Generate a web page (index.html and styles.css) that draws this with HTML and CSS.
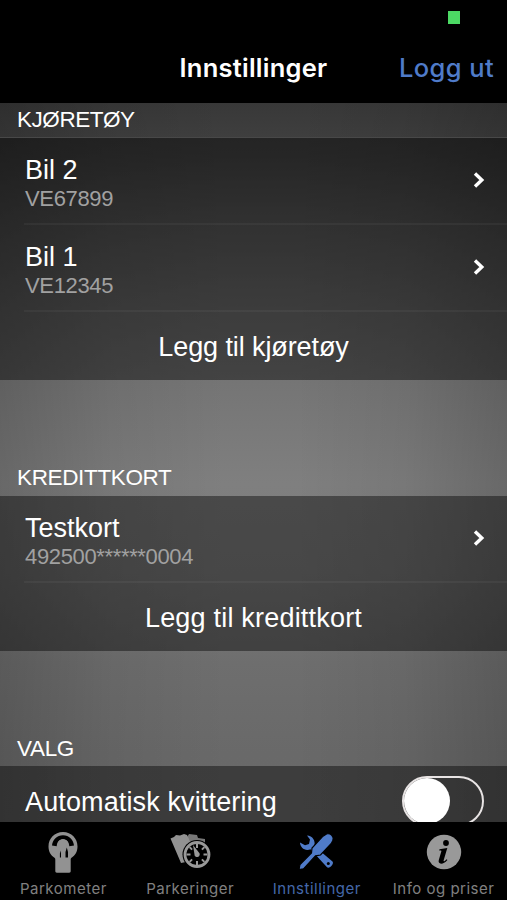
FILE: index.html
```html
<!DOCTYPE html>
<html lang="no">
<head>
<meta charset="utf-8">
<title>Innstillinger</title>
<link rel="stylesheet" href="styles.css">
</head>
<body>
<div class="app">
  <header class="navbar">
    <i class="indicator"></i>
    <h1>Innstillinger</h1>
    <a class="logout">Logg ut</a>
  </header>
  <main class="content">
    <h2 class="label label-first">KJØRETØY</h2>
    <section class="group">
      <div class="row">
        <div class="text"><div class="name">Bil 2</div><div class="sub">VE67899</div></div>
        <svg class="chevron" viewBox="0 0 12 18"><path d="M2 2.500 8.800 9 2 15.500"/></svg>
      </div>
      <div class="row">
        <div class="text"><div class="name">Bil 1</div><div class="sub">VE12345</div></div>
        <svg class="chevron" viewBox="0 0 12 18"><path d="M2 2.500 8.800 9 2 15.500"/></svg>
      </div>
      <div class="add add-vehicle">Legg til kjøretøy</div>
    </section>
    <h2 class="label label-card">KREDITTKORT</h2>
    <section class="group">
      <div class="row">
        <div class="text"><div class="name">Testkort</div><div class="sub">492500******0004</div></div>
        <svg class="chevron" viewBox="0 0 12 18"><path d="M2 2.500 8.800 9 2 15.500"/></svg>
      </div>
      <div class="add add-card">Legg til kredittkort</div>
    </section>
    <h2 class="label">VALG</h2>
    <section class="group">
      <div class="option"><div class="name">Automatisk kvittering</div><span class="switch"></span></div>
    </section>
  </main>
  <nav class="tabs">
    <a class="tab">
      <svg viewBox="0 0 44 44"><path fill="#929292" d="M22 2C13.500 2 7.500 8.500 7.500 16.500c0 5 2.300 9 6 11.300.8.700.8 1.200.8 2.200v11c0 1 .5 1.700 1.500 1.700h12.400c1 0 1.500-.7 1.500-1.700V30c0-1 0-1.500.8-2.200 3.700-2.300 6-6.300 6-11.300C36.500 8.500 30.500 2 22 2z"/><path fill="#000" d="M11 15.500C11.500 9.500 16 5.200 22 5.200s10.500 4.300 11 10.300l-4.700.7c-.3-4-2.700-6.700-6.300-6.700s-6 2.700-6.300 6.700z"/><circle cx="22" cy="14.500" r="5.500" fill="#929292"/><path fill="#000" d="M24.500 27.500v-5.500l1.300-4.500 1.200 4.500v5.500zM18.900 27.500v-4l.6-3 .5 3v4z"/></svg>
      <span>Parkometer</span>
    </a>
    <a class="tab">
      <svg viewBox="0 0 44 44"><path fill="#777" d="m18 9 3-5 8 1 1 3 7 1v5L22 18z"/><path fill="#929292" d="M2.500 8.500 6 7l2-2 4 .5 4-1.500 3 1 1.500 3 2 5L18 32l-5 1z"/><circle cx="29" cy="24.500" r="14.500" fill="#000"/><circle cx="29" cy="24.500" r="12" fill="none" stroke="#999" stroke-width="2.800"/><path fill="none" stroke="#999" stroke-width="2" d="M29 14v4M29 31v4M18.500 24.500h4M35.500 24.500h4M21.600 17.100l2.500 2.500M33.900 29.400l2.500 2.500M21.600 31.900l2.500-2.500M33.900 19.600l2.500-2.500"/><path fill="#999" d="m25 15 6.500 8.200c1.200 3-2.800 5.500-4.800 2.500z"/></svg>
      <span>Parkeringer</span>
    </a>
    <a class="tab active">
      <svg viewBox="0 0 44 44"><path fill="#4f7bc9" d="M12 5.500c5.500 0 9 5.800 7.200 10.500L37.500 31.500c2 2-3 7.800-5.500 5.800L15.500 19.300C10 21.500 5 17.500 5 12.500l5 2.700 4-1.200 1-4.500z"/><circle cx="33.300" cy="33.500" r="1.500" fill="#000"/><path fill="#4f7bc9" stroke="#000" stroke-width="1.200" d="m28 6.200 3.500-2.300c4.200-.9 7.800 2.600 6.300 6.600l-1.500 3L25.500 25l-5 .8L8.500 38.800 4 39.500l1-5 11.500-11.500.5-5z"/></svg>
      <span>Innstillinger</span>
    </a>
    <a class="tab">
      <svg viewBox="0 0 44 44"><circle cx="22" cy="22" r="17.200" fill="#999"/><circle cx="24" cy="13" r="2.900" fill="#000"/><path fill="#000" d="m17.500 19.300 7.800-1.300-3.700 12.500c-.2 1 .5 1 1.200.4l1.800-1.600.8.800c-2.200 2.600-4.300 3.600-6.200 3.600-2.200 0-3-1.500-2.400-3.600l2.500-8.500c.2-.8 0-1.200-.8-1.200h-1.300z"/></svg>
      <span>Info og priser</span>
    </a>
  </nav>
</div>
</body>
</html>
```
FILE: styles.css
```css
* { box-sizing: border-box; }
body { margin: 0; background: #000; }
.app {
  width: 507px;
  height: 900px;
  display: flex;
  flex-direction: column;
  overflow: hidden;
  color: #fff;
  font-family: "Liberation Sans", Arial, sans-serif;
}
h1, h2 { margin: 0; font-weight: 400; }
.navbar {
  position: relative;
  flex: none;
  height: 103px;
  padding: 35px 13px 0;
  display: grid;
  grid-template-columns: 1fr auto 1fr;
  background: #000;
  font-family: Inter, sans-serif;
  line-height: 66px;
}
.navbar h1 {
  grid-column: 2;
  font-size: 25.5px;
  font-weight: 600;
  letter-spacing: 0.25px;
}
.logout {
  justify-self: end;
  color: #4f7bc9;
  font-size: 25.5px;
  font-weight: 500;
  letter-spacing: 0.4px;
}
.indicator {
  position: absolute;
  left: 448px;
  top: 11px;
  width: 12px;
  height: 13px;
  background: #4cd964;
}
.content {
  flex: none;
  height: 719px;
  overflow: hidden;
  background:
    linear-gradient(90deg, rgba(0,0,0,.18), rgba(0,0,0,.06) 22%, transparent 45%, transparent 58%, rgba(0,0,0,.06) 80%, rgba(0,0,0,.18)),
    linear-gradient(#383838 0, #424242 50px, #555 120px, #696969 210px, #757575 280px, #7f7f7f 380px, #7b7b7b 470px, #6e6e6e 560px, #696969 650px, #6a6a6a 719px);
}
.label {
  height: 115px;
  padding: 85px 17px 0;
  font-size: 22.5px;
  line-height: 26px;
  letter-spacing: -0.35px;
}
.label-first {
  height: 35px;
  padding-top: 4px;
  border-bottom: 1px solid #484848;
  letter-spacing: -0.45px;
}
.label-card { height: 116px; }
.group { background: rgba(0,0,0,.42); }
.row {
  height: 87px;
  margin-left: 24px;
  padding: 15px 22px 0 1px;
  display: flex;
  justify-content: space-between;
  border-bottom: 2px solid rgba(255,255,255,.045);
}
.name { font-size: 27px; line-height: 34px; white-space: pre; }
.sub { color: #a1a1a1; font-size: 22px; line-height: 23px; letter-spacing: -0.35px; }
.chevron { width: 12px; height: 18px; margin-top: 18px; }
.chevron path { fill: none; stroke: #fff; stroke-width: 3.4; }
.add { height: 68px; font-size: 27px; line-height: 71px; text-align: center; }
.add-vehicle { letter-spacing: -0.1px; }
.add-card { letter-spacing: 0.2px; }
.option {
  height: 87px;
  padding: 10px 23px 0 25px;
  display: flex;
  justify-content: space-between;
}
.option .name { line-height: 53px; letter-spacing: 0.13px; }
.switch {
  width: 82px;
  height: 50px;
  border: 2px solid #e8e4e4;
  border-radius: 25px;
}
.switch::before {
  content: "";
  display: block;
  width: 46px;
  height: 46px;
  border-radius: 50%;
  background: #fff;
}
.tabs {
  flex: none;
  height: 78px;
  display: grid;
  grid-template-columns: repeat(4, 1fr);
  background: #000;
  color: #808080;
  font-family: Inter, sans-serif;
}
.tab {
  display: flex;
  flex-direction: column;
  align-items: center;
  padding-top: 8px;
  font-size: 15px;
  line-height: 20px;
  letter-spacing: 0.5px;
  white-space: nowrap;
}
.tab svg { width: 44px; height: 44px; margin-bottom: 5px; flex: none; }
.active { color: #4468aa; }
```
